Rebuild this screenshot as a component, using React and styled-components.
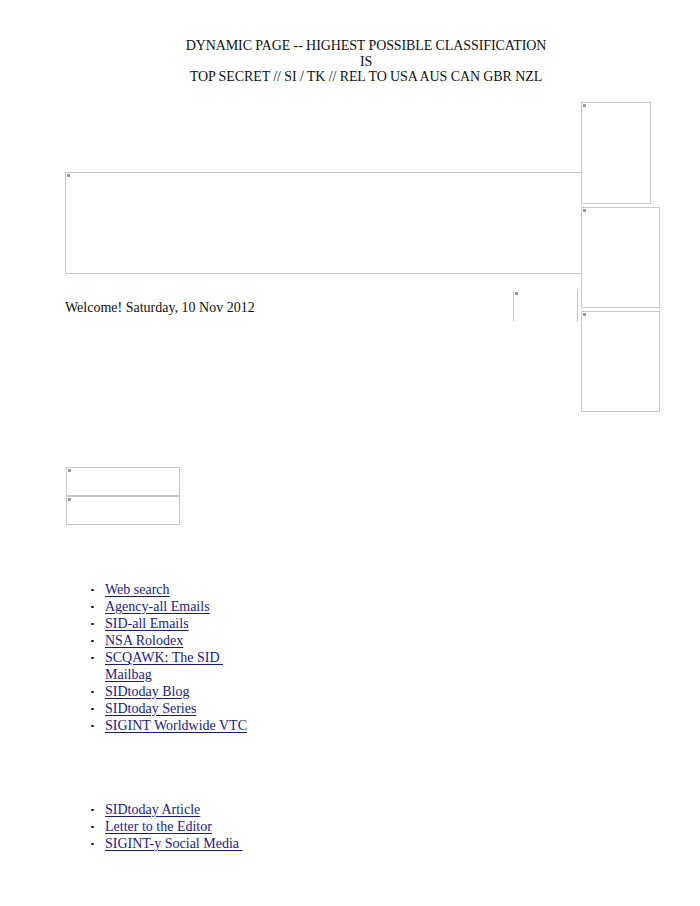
import React from 'react';
import styled, { createGlobalStyle } from 'styled-components';

const GlobalStyle = createGlobalStyle`
  html, body {
    margin: 0;
    padding: 0;
    background: #ffffff;
  }
  body {
    font-family: "Liberation Serif", "Times New Roman", serif;
    color: #111111;
  }
`;

const Page = styled.div`
  width: 700px;
  padding: 38px 0 40px 65px;
  box-sizing: border-box;
`;

const Banner = styled.div`
  width: 602px;
  text-align: center;
  font-size: 14px;
  line-height: 15.5px;
  letter-spacing: -0.1px;
`;

const Top = styled.div`
  display: grid;
  grid-template-columns: 516px 80px;
  margin-top: 17px;
`;

const LeftCol = styled.div`
  padding-top: 70px;
`;

const RightCol = styled.div`
  display: flex;
  flex-direction: column;
  gap: 3px;
`;

// placeholder frame of a missing image, with the little broken-image mark
const Frame = styled.div`
  position: relative;
  box-sizing: border-box;
  width: ${p => p.$w}px;
  height: ${p => p.$h}px;
  border: 1px solid #c9c9c9;
  border-right-color: ${p => (p.$noRight ? 'transparent' : '#c9c9c9')};
  border-top-color: ${p => (p.$sidesOnly ? 'transparent' : '#c9c9c9')};
  border-bottom-color: ${p => (p.$sidesOnly ? 'transparent' : '#c9c9c9')};

  &::before {
    content: "";
    position: absolute;
    left: 1px;
    top: 1px;
    width: 3px;
    height: 3px;
    background: #9a9a9a;
  }
`;

const WelcomeRow = styled.div`
  display: flex;
  align-items: center;
  margin-top: 17px;
  height: 31px;
`;

const Welcome = styled.span`
  font-size: 14px;
  width: 448px;
  padding-top: 3px;
`;

const StackedFrames = styled.div`
  margin-top: 55px;
  margin-left: 1px;
  display: flex;
  flex-direction: column;
`;

const LinkList = styled.ul`
  list-style: none;
  margin: ${p => p.$top}px 0 0 0;
  padding: 0 0 0 26px;
  width: 160px;
  font-size: 14px;
  line-height: 17px;
`;

const Item = styled.li`
  position: relative;
  padding-left: 14px;

  &::before {
    content: "";
    position: absolute;
    left: 0;
    top: 8px;
    width: 2.5px;
    height: 2.5px;
    border-radius: 50%;
    background: #222;
  }
`;

const Link = styled.a`
  color: #1b1b86;
  text-decoration: underline;
  text-decoration-thickness: 1px;
  text-underline-offset: 2px;
`;

const tools = [
  'Web search',
  'Agency-all Emails',
  'SID-all Emails',
  'NSA Rolodex',
  'SCQAWK: The SID\u00a0 Mailbag',
  'SIDtoday Blog',
  'SIDtoday Series',
  'SIGINT Worldwide VTC',
];

const contribute = [
  'SIDtoday Article',
  'Letter to the Editor',
  'SIGINT-y Social Media\u00a0',
];

export default function App() {
  return (
    <>
      <GlobalStyle />
      <Page>
        <Banner>
          DYNAMIC PAGE -- HIGHEST POSSIBLE CLASSIFICATION
          <br />
          IS
          <br />
          TOP SECRET // SI / TK // REL TO USA AUS CAN GBR NZL
        </Banner>

        <Top>
          <LeftCol>
            <Frame $w={517} $h={102} $noRight />
            <WelcomeRow>
              <Welcome>Welcome! Saturday, 10 Nov 2012</Welcome>
              <Frame $w={65} $h={32} $sidesOnly />
            </WelcomeRow>
          </LeftCol>
          <RightCol>
            <Frame $w={70} $h={102} />
            <Frame $w={79} $h={101} />
            <Frame $w={79} $h={101} />
          </RightCol>
        </Top>

        <StackedFrames>
          <Frame $w={114} $h={29} />
          <Frame $w={114} $h={29} />
        </StackedFrames>

        <LinkList $top={56}>
          {tools.map(t => (
            <Item key={t}>
              <Link href="#">{t}</Link>
            </Item>
          ))}
        </LinkList>

        <LinkList $top={67}>
          {contribute.map(t => (
            <Item key={t}>
              <Link href="#">{t}</Link>
            </Item>
          ))}
        </LinkList>
      </Page>
    </>
  );
}
